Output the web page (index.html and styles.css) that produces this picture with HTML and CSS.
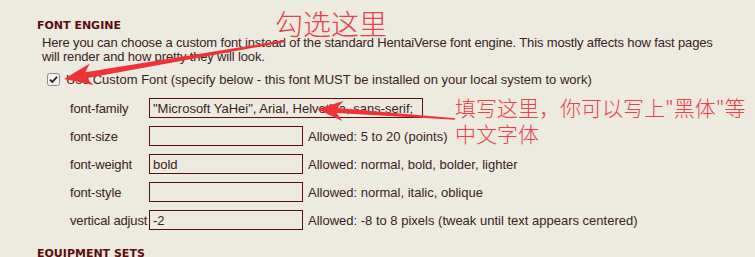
FILE: index.html
```html
<!DOCTYPE html>
<html lang="en">
<head>
    <meta charset="UTF-8">
    <title>Settings - Font Engine</title>
    <link rel="stylesheet" href="styles.css">
</head>
<body>
    <div class="settings">
        <h2 class="section-title">FONT ENGINE</h2>
        <p class="section-text">Here you can choose a custom font instead of the standard HentaiVerse font engine. This mostly affects how fast pages<br>will render and how pretty they will look.</p>

        <label class="check-row">
            <svg class="check-box" width="13" height="13" viewBox="0 0 13 13">
                <rect x="0.5" y="0.5" width="12" height="12" rx="2" fill="#f2f2f2" stroke="#8a8a8a"/>
                <path d="M3 6.6 L5.3 9 L10 3.8" fill="none" stroke="#222" stroke-width="1.8"/>
            </svg>
            <span>Use Custom Font (specify below - this font MUST be installed on your local system to work)</span>
        </label>

        <div class="font-rows">
            <div class="font-row">
                <span class="font-label">font-family</span>
                <input type="text" class="font-input wide" value="&quot;Microsoft YaHei&quot;, Arial, Helvetica, sans-serif;">
            </div>
            <div class="font-row">
                <span class="font-label">font-size</span>
                <input type="text" class="font-input" value="">
                <span class="font-hint">Allowed: 5 to 20 (points)</span>
            </div>
            <div class="font-row">
                <span class="font-label">font-weight</span>
                <input type="text" class="font-input" value="bold">
                <span class="font-hint">Allowed: normal, bold, bolder, lighter</span>
            </div>
            <div class="font-row">
                <span class="font-label">font-style</span>
                <input type="text" class="font-input" value="">
                <span class="font-hint">Allowed: normal, italic, oblique</span>
            </div>
            <div class="font-row">
                <span class="font-label">vertical adjust</span>
                <input type="text" class="font-input" value="-2">
                <span class="font-hint">Allowed: -8 to 8 pixels (tweak until text appears centered)</span>
            </div>
        </div>

        <h2 class="section-title next">EQUIPMENT SETS</h2>
    </div>

    <!-- red notes drawn over the screenshot -->
    <div class="note note-check">勾选这里</div>
    <div class="note note-family">填写这里，你可以写上"黑体"等<br>中文字体</div>
    <svg class="arrows" width="755" height="257" viewBox="0 0 755 257">
        <polygon points="64,79 89.7,63.4 85.2,72.3 284.8,40 285.2,42 86.2,78.3 93.5,85.1"/>
        <polygon points="317,109 343.6,100.9 337.1,108 455.1,118.2 454.9,119.8 336.7,112.9 342.2,120.9"/>
    </svg>
</body>
</html>
```

FILE: styles.css
```css
body {
    margin: 0;
    background-color: #edeae0;
    color: #3a2222;
    font-family: "Liberation Sans", Arial, sans-serif;
    font-size: 13px;
    width: 755px;
    height: 257px;
    overflow: hidden;
    position: relative;
}
.settings {
    padding: 19px 0 0 37px;
}
.section-title {
    margin: 0;
    font-family: "DejaVu Sans", sans-serif;
    font-weight: bold;
    font-size: 11px;
    line-height: 13px;
    color: #5c0d11;
    white-space: nowrap;
}
.section-title.next {
    margin-top: 13px;
}
.section-text {
    margin: 4px 0 0 5px;
    line-height: 14px;
    letter-spacing: -0.15px;
    white-space: nowrap;
}
.check-row {
    display: flex;
    align-items: center;
    gap: 6px;
    margin: 8px 0 0 10px;
    height: 14px;
}
.check-box {
    display: block;
    flex: none;
}
.font-rows {
    margin: 8px 0 0 33px;
}
.font-row {
    display: flex;
    align-items: center;
    height: 28px;
    white-space: nowrap;
}
.font-label {
    width: 79px;
    flex: none;
    letter-spacing: -0.15px;
}
.font-input {
    box-sizing: border-box;
    width: 154px;
    height: 20px;
    margin: 0;
    padding: 0 3px;
    border: 1px solid #5c0d11;
    background: transparent;
    color: #3a2222;
    font-family: "Liberation Sans", Arial, sans-serif;
    font-size: 13px;
    flex: none;
}
.font-input.wide {
    width: 274px;
}
.font-hint {
    margin-left: 5px;
}
.note {
    position: absolute;
    color: #e8414b;
    font-family: "Noto Sans CJK SC", sans-serif;
    font-weight: 300;
    white-space: nowrap;
    z-index: 2;
}
.note-check {
    left: 275px;
    top: 7px;
    font-size: 28px;
    line-height: 32px;
}
.note-family {
    left: 455px;
    top: 94px;
    font-size: 21px;
    line-height: 26px;
}
.arrows {
    position: absolute;
    left: 0;
    top: 0;
    z-index: 3;
    fill: #ee3236;
}
```
